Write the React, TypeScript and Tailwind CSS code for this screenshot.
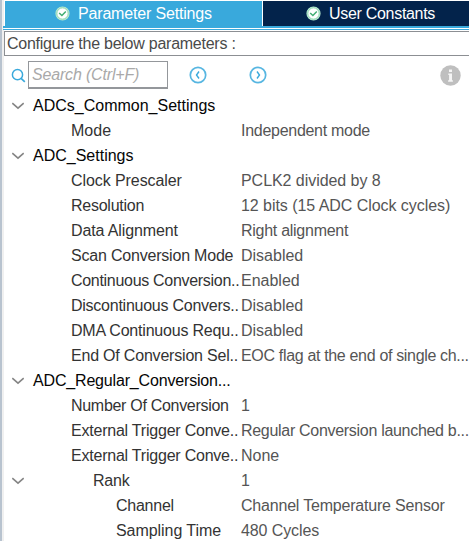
type Row = {
  name: string;
  value?: string;
  level: 0 | 1 | 2 | 3;
  open?: boolean;
  nameTracking?: string;
  valueTracking?: string;
};

const rows: Row[] = [
  { name: "ADCs_Common_Settings", level: 0, open: true },
  { name: "Mode", value: "Independent mode", level: 1, valueTracking: "tracking-[-0.28px]" },
  { name: "ADC_Settings", level: 0, open: true },
  { name: "Clock Prescaler", value: "PCLK2 divided by 8", level: 1, nameTracking: "tracking-[-0.08px]", valueTracking: "tracking-[-0.05px]" },
  { name: "Resolution", value: "12 bits (15 ADC Clock cycles)", level: 1, nameTracking: "tracking-[-0.25px]", valueTracking: "tracking-[-0.05px]" },
  { name: "Data Alignment", value: "Right alignment", level: 1, nameTracking: "tracking-[-0.12px]", valueTracking: "tracking-[-0.27px]" },
  { name: "Scan Conversion Mode", value: "Disabled", level: 1, nameTracking: "tracking-[-0.2px]" },
  { name: "Continuous Conversion..", value: "Enabled", level: 1, nameTracking: "tracking-[-0.3px]" },
  { name: "Discontinuous Convers..", value: "Disabled", level: 1, nameTracking: "tracking-[-0.25px]" },
  { name: "DMA Continuous Requ..", value: "Disabled", level: 1, nameTracking: "tracking-[-0.2px]" },
  { name: "End Of Conversion Sel..", value: "EOC flag at the end of single ch...", level: 1, nameTracking: "tracking-[-0.2px]", valueTracking: "tracking-[-0.33px]" },
  { name: "ADC_Regular_Conversion...", level: 0, open: true, nameTracking: "tracking-[-0.17px]" },
  { name: "Number Of Conversion", value: "1", level: 1, nameTracking: "tracking-[-0.3px]" },
  { name: "External Trigger Conve..", value: "Regular Conversion launched b...", level: 1, nameTracking: "tracking-[-0.22px]", valueTracking: "tracking-[-0.3px]" },
  { name: "External Trigger Conve..", value: "None", level: 1, nameTracking: "tracking-[-0.22px]" },
  { name: "Rank", value: "1", level: 2, open: true, nameTracking: "tracking-[-0.2px]" },
  { name: "Channel", value: "Channel Temperature Sensor", level: 3, nameTracking: "tracking-[-0.25px]", valueTracking: "tracking-[-0.2px]" },
  { name: "Sampling Time", value: "480 Cycles", level: 3, nameTracking: "tracking-[-0.06px]", valueTracking: "tracking-[-0.1px]" },
];

const indent = ["pl-[5px] text-[#050505]", "pl-[43px] text-[#333]", "pl-[65px] text-[#333]", "pl-[88px] text-[#333]"];

function Check() {
  return (
    <svg className="size-[15px] shrink-0" viewBox="0 0 15 15" fill="none">
      <circle cx="7.5" cy="7.5" r="6.4" fill="#fff" stroke="#b8ead0" strokeWidth="1.4" />
      <circle cx="7.5" cy="7.5" r="5.6" stroke="#72c99b" strokeWidth=".7" />
      <path d="M4.2 7 6.9 9.5 10.8 5.5" stroke="#41ad72" strokeWidth="1.5" />
    </svg>
  );
}

function Step({ next = false }: { next?: boolean }) {
  return (
    <svg className="size-[18px] shrink-0" viewBox="0 0 18 18" fill="none" stroke="#39a9dc">
      <circle cx="9" cy="9" r="7.7" strokeWidth="1.7" strokeOpacity=".85" />
      <path d={next ? "M8 5.5 10.5 9 8 12.5" : "M10 5.5 7.5 9 10 12.5"} strokeWidth="1.4" />
    </svg>
  );
}

export default function App() {
  return (
    <div className="h-[541px] w-[469px] overflow-hidden border-l-2 border-[#b8c3cf] bg-white font-['Liberation_Sans',Arial,sans-serif] text-[16px] whitespace-pre">
      <div className="h-full border-l-2 border-[#f0f0f0]">
        <div className="flex h-[26px] gap-px pt-px pl-px">
          <div className="flex w-[257px] items-center bg-[#39a9dc] pl-[50px] text-white">
            <Check />
            <span className="ml-2 leading-6 tracking-[-0.17px]">Parameter Settings</span>
          </div>
          <div className="flex flex-1 items-center bg-[#03234b] pl-[43px] text-white">
            <Check />
            <span className="ml-2 leading-6 tracking-[-0.3px]">User Constants</span>
          </div>
        </div>
        <div className="-ml-px h-[4px] border-t-2 border-b border-[#39a9dc]" />
        <div className="mt-px flex h-[25px] items-center border border-r-0 border-[#8c8f93] pl-[2px] text-[#4a4a4a]">
          <span className="tracking-[-0.25px]">Configure the below parameters :</span>
        </div>
        <div className="flex h-[37px] items-start pt-[5px]">
          <svg className="mt-[7px] ml-[7px] size-[15px]" viewBox="0 0 15 15" fill="none" stroke="#39a9dc">
            <circle cx="6.5" cy="6.7" r="5.1" strokeWidth="1.5" />
            <path d="m10.1 10.4 3.7 3.5" strokeWidth="1.7" />
          </svg>
          <div className="ml-[2px] flex h-[28px] w-[140px] items-center border border-b-2 border-[#94979b] pt-px pl-[3px] tracking-[-0.17px] text-[#a9a9a9] italic">
            Search (Ctrl+F)
          </div>
          <div className="mt-[5px] ml-[21px]"><Step /></div>
          <div className="mt-[5px] ml-[42px]"><Step next /></div>
          <svg className="mt-[4px] ml-[173px] size-[21px]" viewBox="0 0 21 21">
            <circle cx="10.5" cy="10.5" r="10.2" fill="#bfbfbf" />
            <path d="M8.3 8.5h3.7v6.7h.9v1.5H8.1v-1.5h1V10h-.8zM9 4.4h3v2.5H9z" fill="#f5f5f5" />
          </svg>
        </div>
        {rows.map((row, i) => (
          <div key={i} className="flex h-[25px] leading-[25px]">
            <div className="w-[25px] shrink-0 pt-[9px] pl-[8px]">
              {row.open && (
                <svg className="size-[12px]" viewBox="0 0 12 12" fill="none">
                  <path d="M.3 1.2 6 6.2 11.7 1.2" stroke="#858585" strokeWidth="1.6" />
                </svg>
              )}
            </div>
            <div className={`-ml-px w-[210px] shrink-0 ${indent[row.level]}`}>
              <span className={row.nameTracking}>{row.name}</span>
            </div>
            <div className="pl-[3px] text-[#555]">
              <span className={row.valueTracking}>{row.value}</span>
            </div>
          </div>
        ))}
      </div>
    </div>
  );
}
